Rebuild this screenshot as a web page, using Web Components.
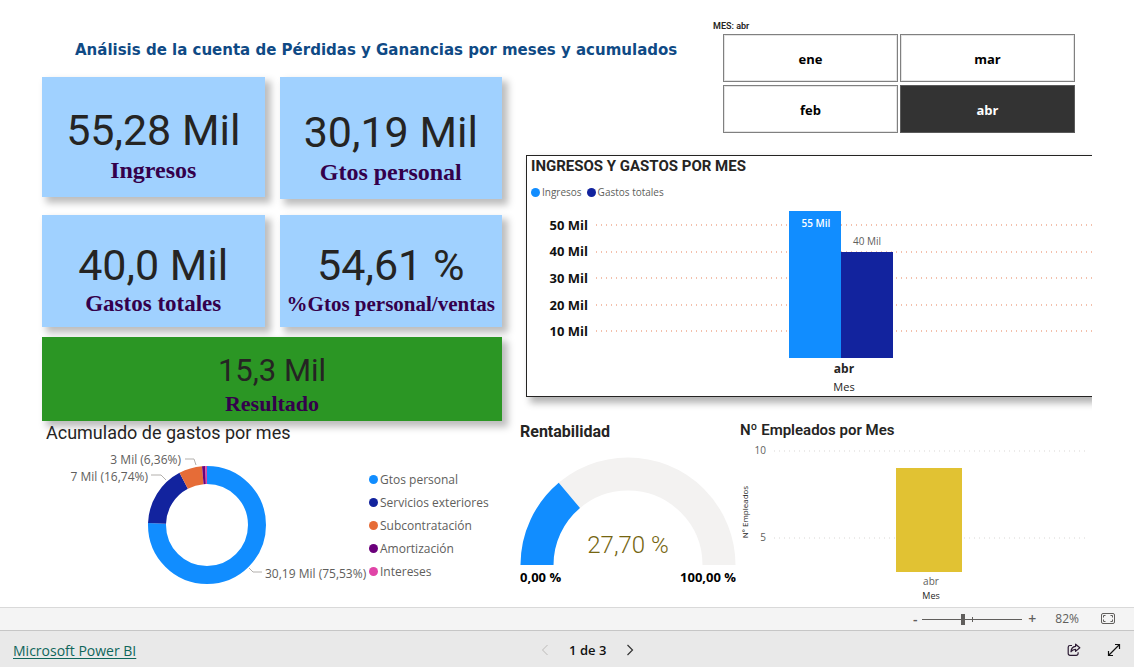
<!DOCTYPE html>
<html lang="es">
<head>
<meta charset="utf-8">
<title>Análisis de Pérdidas y Ganancias</title>
<style>
  html, body { margin: 0; height: 100%; }
  body { background: #fff; color: #252423; font-family: "Open Sans", "Noto Sans", sans-serif; }
</style>
</head>
<body>
<report-app></report-app>

<template id="t-report-app">
  <style>
    :host { display: flex; flex-direction: column; min-height: 100%; }
    main { flex: 1; padding: 0 42px; overflow: hidden; }
    .top {
      display: grid;
      grid-template-columns: minmax(0, 460fr) minmax(0, 24fr) minmax(0, 183fr) minmax(0, 383fr);
      grid-template-rows: 77px 78px auto;
      grid-template-areas: "title title title slicer" "kpis . . slicer" "kpis . chart chart";
    }
    h1 {
      grid-area: title; margin: 0; padding: 40px 0 0 33px; white-space: nowrap;
      font: 700 15px/20px "DejaVu Sans", Verdana, sans-serif; color: #0f4a85;
    }
    .kpis {
      grid-area: kpis; display: grid; grid-template-columns: 1fr 1fr;
      grid-template-rows: 122px 16px 112px 10px 84px; column-gap: 15px;
    }
    .r1 { grid-row: 1; --pad: 14px; --label: 24px; --gap: 3px; }
    .r2 { grid-row: 3; --pad: 10px; --label: 23px; }
    .short { height: 120px; }
    .long { --label: 21px; }
    .result { grid-row: 5; grid-column: 1 / -1; --pad: 4px; --bg: #2b9624; --size: 31px; --line: 36px; }
    month-slicer { grid-area: slicer; }
    income-chart { grid-area: chart; align-self: start; }
    .bottom { display: grid; grid-template-columns: minmax(0, 478fr) minmax(0, 220fr) minmax(0, 352fr); }
  </style>
  <main>
    <section class="top">
      <h1>Análisis de la cuenta de Pérdidas y Ganancias por meses y acumulados</h1>
      <div class="kpis">
        <kpi-card class="r1 short">55,28 Mil<span slot="label">Ingresos</span></kpi-card>
        <kpi-card class="r1">30,19 Mil<span slot="label">Gtos personal</span></kpi-card>
        <kpi-card class="r2">40,0 Mil<span slot="label">Gastos totales</span></kpi-card>
        <kpi-card class="r2 long">54,61 %<span slot="label">%Gtos personal/ventas</span></kpi-card>
        <kpi-card class="result">15,3 Mil<span slot="label">Resultado</span></kpi-card>
      </div>
      <month-slicer></month-slicer>
      <income-chart></income-chart>
    </section>
    <section class="bottom">
      <expense-donut></expense-donut>
      <profit-gauge></profit-gauge>
      <staff-chart></staff-chart>
    </section>
  </main>
  <zoom-bar></zoom-bar>
  <page-bar></page-bar>
</template>

<template id="t-kpi-card">
  <style>
    :host {
      display: flex; flex-direction: column; justify-content: flex-end; align-items: center; gap: var(--gap, 2px);
      box-sizing: border-box; padding-bottom: var(--pad); white-space: nowrap;
      background: var(--bg, #a0d1ff); box-shadow: 5px 5px 7px 1px rgba(0, 0, 0, .26);
    }
    .value { font: 400 var(--size, 43px)/var(--line, 48px) Roboto, sans-serif; color: #252423; }
    .label { font: 700 var(--label, 22px)/26px "Liberation Serif", "Times New Roman", serif; color: #34004b; }
  </style>
  <div class="value"><slot></slot></div>
  <div class="label"><slot name="label"></slot></div>
</template>

<template id="t-month-slicer">
  <style>
    :host { display: block; padding: 20px 17px 0 4px; }
    .head { font: 600 9px/12px Roboto, sans-serif; }
    .months { display: grid; grid-template-columns: 1fr 1fr; grid-auto-rows: 48px; gap: 3px 2px; margin: 2px 0 0 10px; }
    button {
      font: 700 13px/18px "Open Sans", "Noto Sans", sans-serif; color: #000; background: #fff;
      border: 1px solid #808080; box-shadow: inset 0 0 0 1px #e4e4e4; padding: 2px 0 0; border-radius: 0;
    }
    button[aria-pressed="true"] { background: #333; color: #fff; border-color: #5a5a5a; box-shadow: none; }
  </style>
  <div class="head">MES: abr</div>
  <div class="months">
    <button type="button" aria-pressed="false">ene</button>
    <button type="button" aria-pressed="false">mar</button>
    <button type="button" aria-pressed="false">feb</button>
    <button type="button" aria-pressed="true">abr</button>
  </div>
</template>

<template id="t-income-chart">
  <style>
    :host { display: block; clip-path: inset(-12px 0 -20px -12px); }
    .panel {
      box-sizing: border-box; height: 242px; background: #fff;
      border: 1px solid #252423; border-right: 0; box-shadow: 5px 5px 7px 1px rgba(0, 0, 0, .3);
    }
    h2 { margin: 0; padding: 0 4px; font: 700 15px/20px Roboto, sans-serif; }
    ul { display: flex; gap: 5px; list-style: none; margin: 8px 0 0 4px; padding: 0; font-size: 10px; line-height: 16px; color: #605e5c; }
    li { display: flex; align-items: center; gap: 2px; }
    li::before { content: ""; width: 9px; height: 9px; border-radius: 50%; background: var(--c); }
    svg { display: block; width: 100%; height: auto; overflow: visible; }
    .grid path { stroke: #f3c0ac; stroke-width: 2; stroke-dasharray: 1 4; }
    .axis { font-weight: 700; font-size: 13px; fill: #111; text-anchor: end; }
    .mid { text-anchor: middle; font-size: 10px; }
  </style>
  <div class="panel">
    <h2>INGRESOS Y GASTOS POR MES</h2>
    <ul><li style="--c:#118dff">Ingresos</li><li style="--c:#12239e">Gastos totales</li></ul>
    <svg viewBox="0 0 565 195" role="img" aria-label="Ingresos y gastos totales de abril">
      <g class="grid">
        <path d="M69 25H565M69 52H565M69 78H565M69 105H565M69 131H565"/>
      </g>
      <g class="axis">
        <text x="61" y="30">50 Mil</text><text x="61" y="56">40 Mil</text><text x="61" y="83">30 Mil</text>
        <text x="61" y="110">20 Mil</text><text x="61" y="136">10 Mil</text>
      </g>
      <rect x="262" y="11" width="52" height="147" fill="#118dff"/>
      <rect x="314" y="52" width="52" height="106" fill="#12239e"/>
      <g class="mid">
        <text x="289" y="27" fill="#fff" font-weight="600">55 Mil</text>
        <text x="340" y="45" fill="#605e5c">40 Mil</text>
        <text x="317" y="173" fill="#252423" font-weight="700" style="font-size:12px">abr</text>
        <text x="317" y="191" fill="#252423" style="font-size:11px">Mes</text>
      </g>
    </svg>
  </div>
</template>

<template id="t-expense-donut">
  <style>
    :host { display: block; }
    h2 { margin: 0; padding: 0 4px; font: 400 18px/23px Roboto, sans-serif; position: relative; }
    .body { display: flex; }
    svg { flex: 0 0 327px; height: 150px; overflow: visible; }
    .ring circle { fill: none; stroke-width: 18; }
    .lead { fill: none; stroke: #b3b0ad; }
    text { font-size: 12px; fill: #605e5c; }
    ul { list-style: none; margin: 24px 0 0; padding: 0; font-size: 12px; line-height: 23px; color: #605e5c; white-space: nowrap; }
    li { display: flex; align-items: center; gap: 2px; }
    li::before { content: ""; width: 9px; height: 9px; border-radius: 50%; background: var(--c); }
  </style>
  <h2>Acumulado de gastos por mes</h2>
  <div class="body">
    <svg viewBox="0 0 327 150" role="img" aria-label="Reparto de gastos">
      <g class="ring" transform="rotate(-90 165 81)">
        <circle cx="165" cy="81" r="50" stroke="#118dff" pathLength="10000" stroke-dasharray="7553 2447"/>
        <circle cx="165" cy="81" r="50" stroke="#12239e" pathLength="10000" stroke-dasharray="1674 8326" stroke-dashoffset="-7553"/>
        <circle cx="165" cy="81" r="50" stroke="#e66c37" pathLength="10000" stroke-dasharray="636 9364" stroke-dashoffset="-9227"/>
        <circle cx="165" cy="81" r="50" stroke="#6b007b" pathLength="10000" stroke-dasharray="92 9908" stroke-dashoffset="-9863"/>
        <circle cx="165" cy="81" r="50" stroke="#e044a7" pathLength="10000" stroke-dasharray="45 9955" stroke-dashoffset="-9955"/>
      </g>
      <path class="lead" d="M143 15H152L154 21M109 31H119L124 36M207 124L211 128H220"/>
      <text x="139" y="20" text-anchor="end">3 Mil (6,36%)</text>
      <text x="106" y="37" text-anchor="end">7 Mil (16,74%)</text>
      <text x="223" y="134">30,19 Mil (75,53%)</text>
    </svg>
    <ul>
      <li style="--c:#118dff">Gtos personal</li>
      <li style="--c:#12239e">Servicios exteriores</li>
      <li style="--c:#e66c37">Subcontratación</li>
      <li style="--c:#6b007b">Amortización</li>
      <li style="--c:#e044a7">Intereses</li>
    </ul>
  </div>
</template>

<template id="t-profit-gauge">
  <style>
    :host { display: block; }
    h2 { margin: 0; font: 700 16px/22px Roboto, sans-serif; }
    svg { display: block; width: 216px; height: 144px; }
    circle { fill: none; stroke-width: 33; }
    .value { font: 300 24px Roboto, sans-serif; fill: #756510; text-anchor: middle; }
    .lim { font-weight: 700; font-size: 13px; fill: #000; }
  </style>
  <h2>Rentabilidad</h2>
  <svg viewBox="0 0 216 144" role="img" aria-label="Rentabilidad">
    <g transform="rotate(180 108 122)">
      <circle cx="108" cy="122" r="91" stroke="#f3f2f1" pathLength="2000" stroke-dasharray="1000 1000"/>
      <circle cx="108" cy="122" r="91" stroke="#118dff" pathLength="2000" stroke-dasharray="277 1723"/>
    </g>
    <text class="value" x="108" y="110">27,70 %</text>
    <text class="lim" x="0" y="139">0,00 %</text>
    <text class="lim" x="216" y="139" text-anchor="end">100,00 %</text>
  </svg>
</template>

<template id="t-staff-chart">
  <style>
    :host { display: block; }
    h2 { margin: 0; font: 600 15px/19px Roboto, sans-serif; }
    svg { display: block; width: 100%; height: auto; overflow: visible; }
    path { stroke: #d9d7d5; stroke-dasharray: 1 4; }
    text { font-size: 10px; fill: #605e5c; }
    .end { text-anchor: end; } .mid { text-anchor: middle; }
    .dark { fill: #252423; font-size: 9px; }
    .side { font-size: 8px; }
  </style>
  <h2>Nº Empleados por Mes</h2>
  <svg viewBox="0 0 352 162" role="img" aria-label="Número de empleados por mes">
    <path d="M34 11H348M34 98H348"/>
    <text class="end" x="26" y="14">10</text>
    <text class="end" x="26" y="101">5</text>
    <text class="mid dark side" transform="translate(8 72) rotate(-90)">Nº Empleados</text>
    <rect x="156" y="28" width="66" height="104" fill="#e1c233"/>
    <text class="mid" x="191" y="145">abr</text>
    <text class="mid dark" x="191" y="159">Mes</text>
  </svg>
</template>

<template id="t-zoom-bar">
  <style>
    :host {
      display: flex; align-items: center; justify-content: flex-end; box-sizing: border-box; height: 23px;
      padding-right: 19px; background: #f4f4f4; border-top: 1px solid #d9d9d9; color: #605e5c;
    }
    button { border: 0; background: none; padding: 0; color: inherit; font: 600 14px/16px "Open Sans", sans-serif; width: 14px; display: block; }
    input { appearance: none; width: 100px; height: 11px; margin: 0 3px 0 0;
      background: linear-gradient(#605e5c, #605e5c) 0 5px / 100% 1px no-repeat, linear-gradient(#605e5c, #605e5c) 50px 3px / 1px 5px no-repeat; }
    input::-webkit-slider-thumb { appearance: none; width: 4px; height: 11px; background: #605e5c; border-radius: 0; }
    output { font-size: 12px; line-height: 16px; margin: 0 22px 0 16px; }
    svg { display: block; }
  </style>
  <button type="button" aria-label="Alejar">-</button>
  <input type="range" min="0" max="100" value="40" aria-label="Zoom">
  <button type="button" aria-label="Acercar">+</button>
  <output>82%</output>
  <button type="button" aria-label="Ajustar a la página">
    <svg width="15" height="12" viewBox="0 0 15 12" fill="none" stroke="#605e5c">
      <rect x=".5" y=".5" width="13" height="10" rx="1.5"/>
      <path d="M4.500 2.500h-2v2M2.500 6.500v2h2M9.500 2.500h2v2M11.500 6.500v2h-2"/>
    </svg>
  </button>
</template>

<template id="t-page-bar">
  <style>
    :host {
      display: grid; grid-template-columns: 467fr 92fr 430fr; align-items: center; box-sizing: border-box;
      height: 37px; padding: 2px 13px 0 13px; background: #e9e9e9; border-top: 1px solid #c6c6c6; font-size: 14px; line-height: 20px;
    }
    a { color: #0f665b; justify-self: start; text-underline-offset: 2px; padding-top: 2px; }
    nav, .tools { display: flex; align-items: center; }
    nav { gap: 20px; color: #111; font-size: 13px; font-weight: 600; white-space: nowrap; justify-self: center; }
    .tools { gap: 26px; justify-self: end; }
    button { border: 0; background: none; padding: 0; display: block; }
    svg { display: block; fill: none; }
  </style>
  <a href="#">Microsoft Power BI</a>
  <nav aria-label="Páginas">
    <button type="button" aria-label="Página anterior" disabled><svg width="8" height="12" viewBox="0 0 8 12" stroke="#bdbbb9"><path d="M6.500 1L1.500 6l5 5"/></svg></button>
    <span>1 de 3</span>
    <button type="button" aria-label="Página siguiente"><svg width="8" height="12" viewBox="0 0 8 12" stroke="#333" stroke-width="1.200"><path d="M1.500 1l5 5-5 5"/></svg></button>
  </nav>
  <div class="tools">
    <button type="button" aria-label="Compartir">
      <svg width="14" height="14" viewBox="0 0 14 14" stroke="#2b1a33" stroke-width="1.200" stroke-linejoin="round">
        <path d="M5 2.500H3A1.800 1.800 0 0 0 1.200 4.300v6.200A1.800 1.800 0 0 0 3 12.300h6.300a1.800 1.800 0 0 0 1.800-1.800V9.300"/>
        <path d="M8.600 1.200l4.200 3.600-4.200 3.600V6.300C6.300 6.300 5 7.200 4 8.800 4.100 5.800 5.500 3.600 8.600 3.300z"/>
      </svg>
    </button>
    <button type="button" aria-label="Pantalla completa">
      <svg width="14" height="14" viewBox="0 0 14 14" stroke="#111" stroke-width="1.200">
        <path d="M1.500 12.500l11-11M8 1.500h4.500V6M1.500 8v4.500H6"/>
      </svg>
    </button>
  </div>
</template>

<script>
  class TemplateElement extends HTMLElement {
    constructor() {
      super();
      const template = document.getElementById('t-' + this.localName);
      this.attachShadow({ mode: 'open' }).append(template.content.cloneNode(true));
    }
  }

  customElements.define('kpi-card', class extends TemplateElement {});
  customElements.define('income-chart', class extends TemplateElement {});
  customElements.define('expense-donut', class extends TemplateElement {});
  customElements.define('profit-gauge', class extends TemplateElement {});
  customElements.define('staff-chart', class extends TemplateElement {});
  customElements.define('page-bar', class extends TemplateElement {});

  customElements.define('month-slicer', class extends TemplateElement {
    connectedCallback() {
      const buttons = [...this.shadowRoot.querySelectorAll('button')];
      buttons.forEach(button => button.addEventListener('click', () => {
        buttons.forEach(b => b.setAttribute('aria-pressed', String(b === button)));
        this.shadowRoot.querySelector('.head').textContent = 'MES: ' + button.textContent;
      }));
    }
  });

  customElements.define('zoom-bar', class extends TemplateElement {
    connectedCallback() {
      const [minus, plus] = this.shadowRoot.querySelectorAll('button');
      const range = this.shadowRoot.querySelector('input');
      minus.addEventListener('click', () => range.stepDown(10));
      plus.addEventListener('click', () => range.stepUp(10));
    }
  });

  customElements.define('report-app', class extends TemplateElement {});
</script>
</body>
</html>
